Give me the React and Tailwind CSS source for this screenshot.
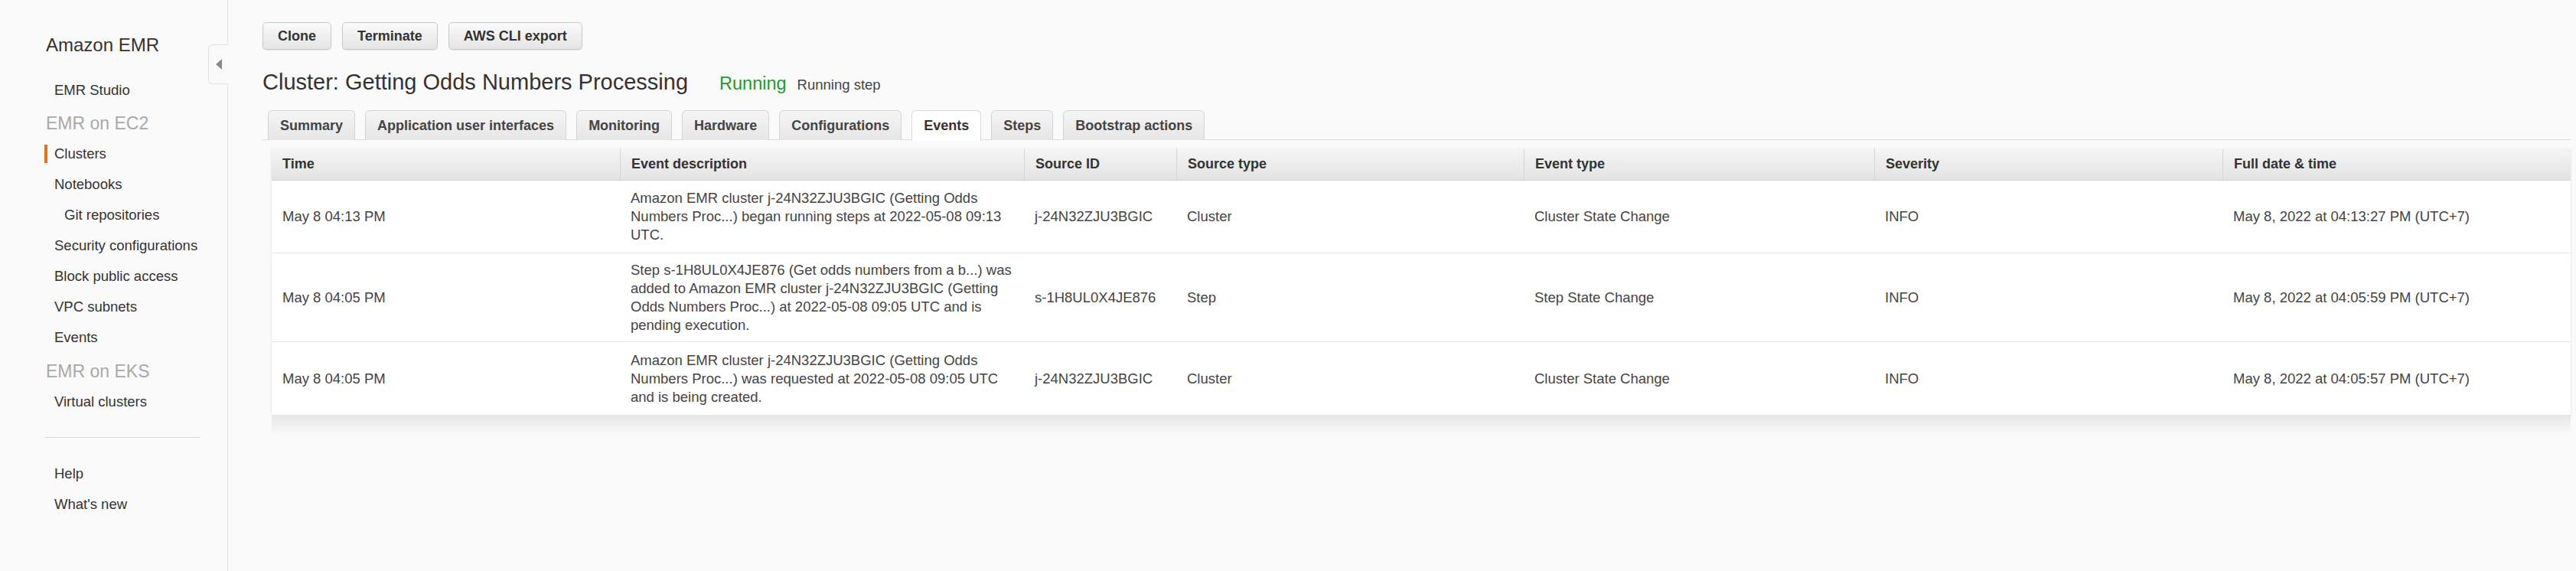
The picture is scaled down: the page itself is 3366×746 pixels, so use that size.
import React from "react";

const FONT = { fontFamily: '"Liberation Sans", Arial, Helvetica, sans-serif' };

const navItems = [
  { type: "item", label: "EMR Studio" },
  { type: "section", label: "EMR on EC2" },
  { type: "item", label: "Clusters", active: true },
  { type: "item", label: "Notebooks" },
  { type: "item", label: "Git repositories", indent: true },
  { type: "item", label: "Security configurations" },
  { type: "item", label: "Block public access" },
  { type: "item", label: "VPC subnets" },
  { type: "item", label: "Events" },
  { type: "section", label: "EMR on EKS" },
  { type: "item", label: "Virtual clusters" },
];

const tabs = [
  "Summary",
  "Application user interfaces",
  "Monitoring",
  "Hardware",
  "Configurations",
  "Events",
  "Steps",
  "Bootstrap actions",
];

const columns = [
  "Time",
  "Event description",
  "Source ID",
  "Source type",
  "Event type",
  "Severity",
  "Full date & time",
];

const rows = [
  {
    h: "h-[95px]",
    time: "May 8 04:13 PM",
    desc: "Amazon EMR cluster j-24N32ZJU3BGIC (Getting Odds Numbers Proc...) began running steps at 2022-05-08 09:13 UTC.",
    id: "j-24N32ZJU3BGIC",
    source: "Cluster",
    event: "Cluster State Change",
    severity: "INFO",
    full: "May 8, 2022 at 04:13:27 PM (UTC+7)",
  },
  {
    h: "h-[116px]",
    time: "May 8 04:05 PM",
    desc: "Step s-1H8UL0X4JE876 (Get odds numbers from a b...) was added to Amazon EMR cluster j-24N32ZJU3BGIC (Getting Odds Numbers Proc...) at 2022-05-08 09:05 UTC and is pending execution.",
    id: "s-1H8UL0X4JE876",
    source: "Step",
    event: "Step State Change",
    severity: "INFO",
    full: "May 8, 2022 at 04:05:59 PM (UTC+7)",
  },
  {
    h: "h-[95px]",
    time: "May 8 04:05 PM",
    desc: "Amazon EMR cluster j-24N32ZJU3BGIC (Getting Odds Numbers Proc...) was requested at 2022-05-08 09:05 UTC and is being created.",
    id: "j-24N32ZJU3BGIC",
    source: "Cluster",
    event: "Cluster State Change",
    severity: "INFO",
    full: "May 8, 2022 at 04:05:57 PM (UTC+7)",
  },
];

const GRID = "grid grid-cols-[455px_528px_199px_454px_458px_455px_455px]";

function Sidebar() {
  return (
    <aside className="relative w-[298px] shrink-0 border-r border-[#e2e2e2] bg-[#fafafa] pt-[39px]">
      {/* collapse handle */}
      <div className="absolute right-[-1px] top-[58px] flex h-[52px] w-[26px] items-center justify-center rounded-l-[6px] border border-r-0 border-[#e2e2e2] bg-[#fafafa]">
        <svg width="8" height="14" viewBox="0 0 8 14">
          <path d="M8 0 L0 7 L8 14 Z" fill="#8a8a8a" />
        </svg>
      </div>

      <div className="flex h-[40px] items-center pl-[60px] text-[24px] text-[#333]">Amazon EMR</div>

      <div className="mt-[19px]">
        {navItems.map((it, i) =>
          it.type === "section" ? (
            <div
              key={i}
              className={`flex h-[40px] items-center pl-[60px] text-[23px] text-[#a9a9a9] ${
                it.label === "EMR on EC2" ? "mt-[3px]" : "mt-[4px]"
              }`}
            >
              {it.label}
            </div>
          ) : (
            <div
              key={i}
              className={`relative flex h-[40px] items-center text-[18.5px] text-[#333] ${
                it.indent ? "pl-[84px]" : "pl-[71px]"
              }`}
            >
              {it.active && <span className="absolute left-[58px] top-[8px] h-[24px] w-[4px] bg-[#ec7211]" />}
              {it.label}
            </div>
          )
        )}
      </div>

      <div className="ml-[58px] mt-[26px] h-px w-[203px] bg-[#d9d9d9]" />

      <div className="mt-[27px]">
        <div className="flex h-[40px] items-center pl-[71px] text-[18.5px] text-[#333]">Help</div>
        <div className="flex h-[40px] items-center pl-[71px] text-[18.5px] text-[#333]">What's new</div>
      </div>
    </aside>
  );
}

function Button({ children }) {
  return (
    <button
      type="button"
      className="h-[36px] rounded-[5px] border border-[#c9c9c9] bg-gradient-to-b from-[#fbfbfb] to-[#e4e4e4] px-[19px] text-[18px] font-bold text-[#333] shadow-[0_1px_1px_rgba(0,0,0,0.08)]"
    >
      {children}
    </button>
  );
}

export default function App() {
  return (
    <div style={FONT} className="flex h-[746px] w-full bg-[#fafafa]">
      <Sidebar />

      <main className="flex-1 pl-[45px] pr-[6px] pt-[29px]">
        <div className="flex gap-[14px]">
          <Button>Clone</Button>
          <Button>Terminate</Button>
          <Button>AWS CLI export</Button>
        </div>

        <div className="mt-[24px] flex h-[36px] items-baseline">
          <h1 className="text-[29px] font-normal leading-[36px] text-[#333]">Cluster: Getting Odds Numbers Processing</h1>
          <span className="ml-[41px] text-[23.5px] text-[#1d9a2c]">Running</span>
          <span className="ml-[14px] text-[18.5px] text-[#444]">Running step</span>
        </div>

        {/* tabs */}
        <div className="mt-[19px] flex h-[39px] gap-[13px] border-b border-[#dcdcdc] pl-[7px]">
          {tabs.map((t) =>
            t === "Events" ? (
              <div
                key={t}
                className="relative z-10 flex h-[40px] items-center rounded-t-[6px] border border-b-0 border-[#dcdcdc] bg-white px-[15px] text-[18px] font-bold text-[#333]"
              >
                {t}
              </div>
            ) : (
              <div
                key={t}
                className="flex h-[39px] items-center rounded-t-[6px] border border-b-0 border-[#d4d4d4] bg-gradient-to-b from-[#f5f5f5] to-[#e6e6e6] px-[15px] text-[18px] font-bold text-[#444]"
              >
                {t}
              </div>
            )
          )}
        </div>

        {/* events table */}
        <div className="ml-[12px] mt-[11px] w-[3004px]">
          <div className="bg-white shadow-[0_1px_3px_rgba(0,0,0,0.12)]">
            <div className={`${GRID} h-[42px] border-b border-[#d3d3d3] bg-gradient-to-b from-[#f5f5f5] to-[#e3e3e3]`}>
              {columns.map((c, i) => (
                <div
                  key={c}
                  className={`flex items-center px-[14px] text-[18px] font-bold text-[#333] ${
                    i > 0 ? "border-l border-[#d6d6d6]" : ""
                  }`}
                >
                  {c}
                </div>
              ))}
            </div>

            {rows.map((r, i) => (
              <div
                key={i}
                className={`${GRID} ${r.h} ${i < rows.length - 1 ? "border-b border-[#e3e3e3]" : ""} text-[18.5px] leading-[24px] text-[#444]`}
              >
                <div className="flex items-center px-[14px]">{r.time}</div>
                <div className="flex items-center pl-[14px] pr-[8px]">{r.desc}</div>
                <div className="flex items-center px-[14px]">{r.id}</div>
                <div className="flex items-center px-[14px]">{r.source}</div>
                <div className="flex items-center px-[14px]">{r.event}</div>
                <div className="flex items-center px-[14px]">{r.severity}</div>
                <div className="flex items-center px-[14px]">{r.full}</div>
              </div>
            ))}
          </div>
          <div className="h-[26px] bg-gradient-to-b from-[#e6e6e6] to-[#fafafa]" />
        </div>
      </main>
    </div>
  );
}
